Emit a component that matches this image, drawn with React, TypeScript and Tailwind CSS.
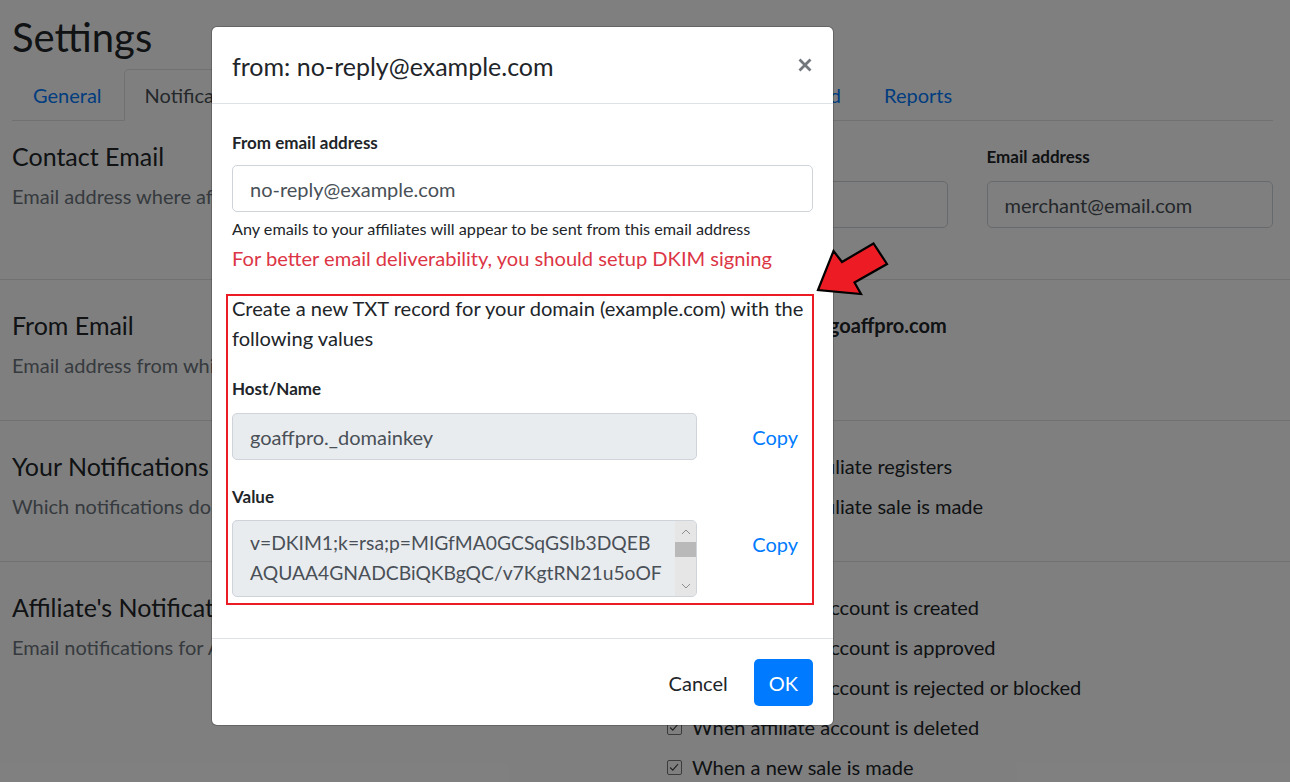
import React from "react";

function Checkbox() {
  return (
    <span className="ml-[6px] mr-[10px] flex h-[15px] w-[15px] shrink-0 items-center justify-center rounded-[2px] border border-[#767676] bg-white">
      <svg viewBox="0 0 15 15" className="h-[13px] w-[13px]">
        <polyline points="2.5,7.5 5.5,10.5 11.5,3.5" fill="none" stroke="#444" strokeWidth="1.3" />
      </svg>
    </span>
  );
}

function CheckRow({ label }: { label: string }) {
  return (
    <div className="mb-[10px] flex h-[30px] items-center text-[20px] leading-[30px]">
      <Checkbox />
      <span className="whitespace-nowrap">{label}</span>
    </div>
  );
}

function SectionLeft({ title, sub }: { title: string; sub: string }) {
  return (
    <div className="w-[649px] shrink-0">
      <div className="mb-[10px] whitespace-nowrap text-[25px] leading-[30px]">{title}</div>
      <div className="overflow-hidden whitespace-nowrap text-[20px] leading-[30px] text-[#6c757d]">{sub}</div>
    </div>
  );
}

function PageInput({ value }: { value: string }) {
  return (
    <div className="flex h-[47px] items-center rounded-[5px] border border-[#ced4da] bg-white px-[17px] text-[20px] text-[#495057]">
      {value}
    </div>
  );
}

const tabs = [
  { name: "General", cls: "" },
  { name: "Notifications", cls: "", active: true },
  { name: "Payouts", cls: "" },
  { name: "Creatives", cls: "" },
  { name: "Integrations", cls: "w-[215px]" },
  { name: "Advanced", cls: "" },
  { name: "Reports", cls: "" },
];

export default function App() {
  return (
    <div className="relative h-[782px] w-[1290px] overflow-hidden bg-white font-['Lato',sans-serif] text-[#212529]">
      {/* Page */}
      <div className="pl-[12px] pr-[17px] pt-[13px]">
        <h1 className="text-[40px] leading-[48px]">Settings</h1>
        <div className="mt-[8px] flex gap-[1px] border-b border-[#dee2e6]">
          {tabs.map((t) => (
            <div
              key={t.name}
              className={
                "mb-[-1px] whitespace-nowrap rounded-t-[5px] border px-[20px] py-[10px] text-[20px] leading-[30px] " +
                t.cls +
                (t.active
                  ? " border-[#dee2e6] border-b-white bg-white text-[#495057]"
                  : " border-transparent text-[#007bff]")
              }
            >
              {t.name}
            </div>
          ))}
        </div>
      </div>

      {/* Section 1 */}
      <div className="flex h-[159px] border-b border-[#dee2e6] pl-[12px] pr-[17px] pt-[20px]">
        <SectionLeft title="Contact Email" sub="Email address where affiliates can contact you" />
        <div className="grid w-[612px] grid-cols-2 gap-x-[39px] pt-[4px]">
          <div>
            <div className="mb-[12px] text-[17px] font-bold leading-[24px]">Name</div>
            <PageInput value="Merchant" />
          </div>
          <div>
            <div className="mb-[12px] text-[17px] font-bold leading-[24px]">Email address</div>
            <PageInput value="merchant@email.com" />
          </div>
        </div>
      </div>

      {/* Section 2 */}
      <div className="flex h-[141px] border-b border-[#dee2e6] pl-[12px] pr-[17px] pt-[30px]">
        <SectionLeft title="From Email" sub="Email address from which emails are sent" />
        <div className="w-[612px]">
          <div className="ml-[76px] text-[20px] font-bold leading-[30px]">no-reply@goaffpro.com</div>
        </div>
      </div>

      {/* Section 3 */}
      <div className="flex h-[141px] border-b border-[#dee2e6] pl-[12px] pr-[17px] pt-[30px]">
        <SectionLeft title="Your Notifications" sub="Which notifications do you want to receive" />
        <div className="w-[612px]">
          <CheckRow label="When a new affiliate registers" />
          <CheckRow label="When a new affiliate sale is made" />
        </div>
      </div>

      {/* Section 4 */}
      <div className="flex pl-[12px] pr-[17px] pt-[30px]">
        <SectionLeft title="Affiliate's Notifications" sub="Email notifications for Affiliates" />
        <div className="w-[612px]">
          <CheckRow label="When affiliate account is created" />
          <CheckRow label="When affiliate account is approved" />
          <CheckRow label="When affiliate account is rejected or blocked" />
          <CheckRow label="When affiliate account is deleted" />
          <CheckRow label="When a new sale is made" />
        </div>
      </div>

      {/* Backdrop */}
      <div className="absolute inset-0 bg-black/50" />

      {/* Modal */}
      <div className="absolute left-[211px] top-[26px] w-[623px] rounded-[6px] border border-black/20 bg-white bg-clip-padding">
        <div className="flex items-start justify-between border-b border-[#dee2e6] px-[20px] pb-[18px] pt-[20px]">
          <div className="text-[25px] leading-[38px]">from: no-reply@example.com</div>
          <svg viewBox="0 0 14 14" className="mr-[1px] mt-[11px] h-[14px] w-[14px]">
            <path d="M1.5 1.5 L12.5 12.5 M12.5 1.5 L1.5 12.5" stroke="#73787e" strokeWidth="2.8" strokeLinecap="butt" fill="none" />
          </svg>
        </div>

        <div className="px-[20px] pb-[41px] pt-[27px]">
          <div className="mb-[10px] text-[17px] font-bold leading-[24px]">From email address</div>
          <div className="flex h-[47px] items-center rounded-[5px] border border-[#ced4da] px-[17px] text-[20px] text-[#495057]">
            no-reply@example.com
          </div>
          <div className="mt-[5px] text-[16.2px] leading-[24px]">
            Any emails to your affiliates will appear to be sent from this email address
          </div>
          <div className="mt-[2px] text-[20.1px] leading-[30px] text-[#dc3545]">
            For better email deliverability, you should setup DKIM signing
          </div>

          <div className="relative mt-[20px]">
            <div className="pointer-events-none absolute -bottom-[8px] -left-[6px] -right-[1px] top-[1px] border-2 border-[#ec1c24]" />
            <p className="text-[20.1px] leading-[30px]">
              Create a new TXT record for your domain (example.com) with the following values
            </p>
            <div className="mb-[12px] mt-[24px] text-[17px] font-bold leading-[24px]">Host/Name</div>
            <div className="flex">
              <div className="flex h-[47px] w-[466px] items-center rounded-[5px] border border-[#ced4da] bg-[#e9ecef] px-[17px] text-[20px] text-[#495057]">
                goaffpro._domainkey
              </div>
              <div className="ml-[40px] flex h-[47px] items-center px-[15px] text-[20px] text-[#007bff]">Copy</div>
            </div>
            <div className="mb-[11px] mt-[25px] text-[17px] font-bold leading-[24px]">Value</div>
            <div className="flex">
              <div className="flex h-[77px] w-[466px] overflow-hidden rounded-[5px] border border-[#ced4da] bg-[#e9ecef]">
                <div className="flex-1 overflow-hidden whitespace-nowrap px-[17px] py-[7px] text-[19.3px] leading-[30px] text-[#495057]">
                  <div>v=DKIM1;k=rsa;p=MIGfMA0GCSqGSIb3DQEB</div>
                  <div>AQUAA4GNADCBiQKBgQC/v7KgtRN21u5oOF</div>
                </div>
                <div className="flex w-[21px] shrink-0 flex-col bg-[#e6e6e6]">
                  <div className="flex h-[21px] items-center justify-center">
                    <svg viewBox="0 0 10 6" className="h-[6px] w-[10px]">
                      <polyline points="1,5 5,1 9,5" fill="none" stroke="#8c8c8c" strokeWidth="1" />
                    </svg>
                  </div>
                  <div className="h-[15px] bg-[#b9b9b9]" />
                  <div className="flex-1" />
                  <div className="flex h-[21px] items-center justify-center">
                    <svg viewBox="0 0 10 6" className="h-[6px] w-[10px]">
                      <polyline points="1,1 5,5 9,1" fill="none" stroke="#8c8c8c" strokeWidth="1" />
                    </svg>
                  </div>
                </div>
              </div>
              <div className="ml-[40px] flex h-[47px] items-center px-[15px] text-[20px] text-[#007bff]">Copy</div>
            </div>
          </div>
        </div>

        <div className="flex justify-end gap-[11px] border-t border-[#dee2e6] px-[20px] pb-[19px] pt-[20px]">
          <div className="flex h-[47px] items-center px-[15px] text-[20px]">Cancel</div>
          <div className="flex h-[47px] items-center rounded-[5px] bg-[#007bff] px-[15px] text-[20px] text-white">OK</div>
        </div>
      </div>

      {/* Annotation arrow */}
      <svg className="absolute left-[800px] top-[230px] h-[80px] w-[100px]" viewBox="0 0 100 80">
        <polygon
          points="18,60 33.5,21 42,32 73.5,13.5 87,34 54.5,52.5 61,64"
          fill="#ed1c24"
          stroke="#000"
          strokeWidth="2.2"
          strokeLinejoin="miter"
        />
      </svg>
    </div>
  );
}
